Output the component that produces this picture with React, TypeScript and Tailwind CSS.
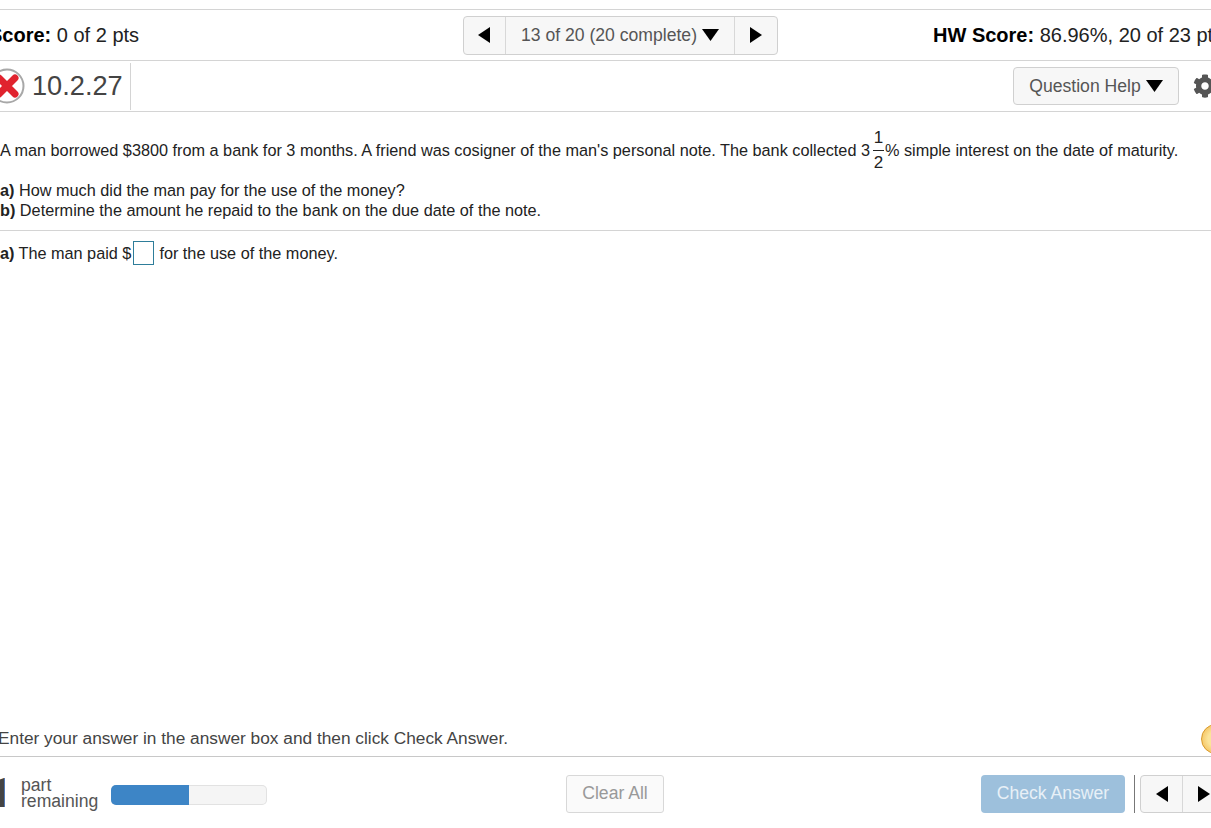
import { FaCog } from "react-icons/fa";

function TriLeft() {
	return (
		<svg width="12" height="16" viewBox="0 0 12 16" aria-hidden="true">
			<path d="M12 0V16L0 8Z" fill="#000" />
		</svg>
	);
}

function TriRight() {
	return (
		<svg width="12" height="16" viewBox="0 0 12 16" aria-hidden="true">
			<path d="M0 0V16L12 8Z" fill="#000" />
		</svg>
	);
}

function TriDown() {
	return (
		<svg width="17" height="12" viewBox="0 0 17 12" aria-hidden="true">
			<path d="M0 0H17L8.5 12Z" fill="#000" />
		</svg>
	);
}

function WrongIcon() {
	return (
		<svg width="36" height="36" viewBox="0 0 36 36" className="shrink-0" aria-hidden="true">
			<circle cx="18" cy="18" r="16.5" fill="#fff" stroke="#a8a8a8" strokeWidth="2" />
			<path d="M10 10L26 26M26 10L10 26" stroke="#e0232e" strokeWidth="7" strokeLinecap="round" />
		</svg>
	);
}

export default function App() {
	return (
		<div className="h-[828px] w-[1211px] overflow-hidden bg-white font-['Liberation_Sans',Arial,sans-serif] text-[#333]">
			<div className="h-[10px] border-b border-[#d4d4d4]" />

			<div className="flex h-[51px] items-center border-b border-[#d4d4d4]">
				<div className="ml-[-11px] w-[474px] shrink-0 text-[20px] text-[#222]">
					<b className="text-black">Score:</b> 0 of 2 pts
				</div>
				<div className="flex h-[39px] w-[315px] shrink-0 rounded-[4px] border border-[#d0d0d0] bg-[#f7f7f7]">
					<button className="flex w-[42px] items-center justify-center border-r border-[#d8d8d8] pr-[2px]">
						<TriLeft />
					</button>
					<button className="flex flex-1 items-center justify-center gap-[5px] text-[17.6px] text-[#555]">
						13 of 20 (20 complete)
						<TriDown />
					</button>
					<button className="flex w-[43px] items-center justify-center border-l border-[#d8d8d8]">
						<TriRight />
					</button>
				</div>
				<div className="ml-[155px] shrink-0 whitespace-nowrap text-[20px] text-[#222]">
					<b className="text-black">HW Score:</b> 86.96%, 20 of 23 pts
				</div>
			</div>

			<div className="flex h-[51px] items-center border-b border-[#d4d4d4]">
				<div className="ml-[-11px] shrink-0">
					<WrongIcon />
				</div>
				<div className="ml-[7px] flex h-[47px] w-[99px] shrink-0 items-center border-r border-[#d4d4d4] text-[27.2px] text-[#444]">
					10.2.27
				</div>
				<button className="ml-[882px] flex h-[38px] w-[166px] shrink-0 items-center justify-center gap-[5px] rounded-[4px] border border-[#d0d0d0] bg-[#f7f7f7] text-[17.6px] text-[#555]">
					Question Help
					<TriDown />
				</button>
				<FaCog className="ml-[14px] shrink-0 text-[24px] text-[#555]" />
			</div>

			<div className="h-[119px] border-b border-[#d4d4d4] text-[16.25px] text-[#222]">
				<p className="flex h-[68px] items-center whitespace-nowrap pt-[8px]">
					A man borrowed $3800 from a bank for 3 months. A friend was cosigner of the man's personal note. The bank collected 3
					<span className="ml-[3px] mr-[1px] inline-flex flex-col items-center text-center text-[17px] leading-[18px]">
						<span className="pb-[3px]">1</span>
						<span className="h-px w-[11px] bg-[#222]" />
						<span className="pt-[3px]">2</span>
					</span>
					% simple interest on the date of maturity.
				</p>
				<p className="leading-[20px]">
					<b>a)</b> How much did the man pay for the use of the money?
				</p>
				<p className="leading-[20px]">
					<b>b)</b> Determine the amount he repaid to the bank on the due date of the note.
				</p>
			</div>

			<div className="flex h-[44px] items-center text-[16.25px] text-[#222]">
				<b>a)</b>
				<span className="ml-[4px]">The man paid $</span>
				<span className="ml-[2px] h-[24px] w-[21px] border border-[#2e7d9a]" />
				<span className="ml-[5px]">for the use of the money.</span>
			</div>

			<div className="h-[451px]" />

			<div className="relative h-[31px] border-b border-[#c8c8c8]">
				<div className="ml-[-2px] whitespace-nowrap text-[17.3px] leading-[24px] text-[#444]">
					Enter your answer in the answer box and then click Check Answer.
				</div>
				<div className="absolute left-[1201px] top-[-2px] h-[30px] w-[30px] rounded-full border border-[#d99a2b] bg-[radial-gradient(circle,#fbe49a_40%,#f0b040_100%)]" />
			</div>

			<div className="flex h-[71px] items-center pt-[2px]">
				<span className="ml-[-11px] w-[16px] shrink-0 overflow-hidden text-right font-['Roboto',sans-serif] text-[40px] font-bold leading-none text-[#444]">1</span>
				<div className="ml-[16px] mt-[-2px] w-[90px] shrink-0 text-[17.6px] leading-[16px] text-[#555]">
					part
					<br />
					remaining
				</div>
				<div className="mt-[2px] flex h-[20px] w-[156px] shrink-0 overflow-hidden rounded-[5px] bg-[#f5f5f5] shadow-[inset_0_0_0_1px_#e2e2e2]">
					<div className="w-1/2 bg-[#3d85c6]" />
				</div>
				<button className="ml-[299px] h-[38px] w-[98px] shrink-0 rounded-[3px] border border-[#d8d8d8] bg-[#fafafa] text-[17.6px] text-[#999]">
					Clear All
				</button>
				<button className="ml-[317px] h-[38px] w-[144px] shrink-0 rounded-[4px] bg-[#9dc0dc] text-[17.6px] text-[#e8f0f7]">
					Check Answer
				</button>
				<div className="ml-[9px] h-[38px] w-px shrink-0 bg-[#777]" />
				<div className="ml-[5px] flex h-[38px] w-[90px] shrink-0 rounded-[4px] border border-[#d0d0d0] bg-[#f7f7f7]">
					<button className="flex w-[42px] items-center justify-center border-r border-[#d8d8d8]">
						<TriLeft />
					</button>
					<button className="flex w-[42px] items-center justify-center">
						<TriRight />
					</button>
				</div>
			</div>
		</div>
	);
}
